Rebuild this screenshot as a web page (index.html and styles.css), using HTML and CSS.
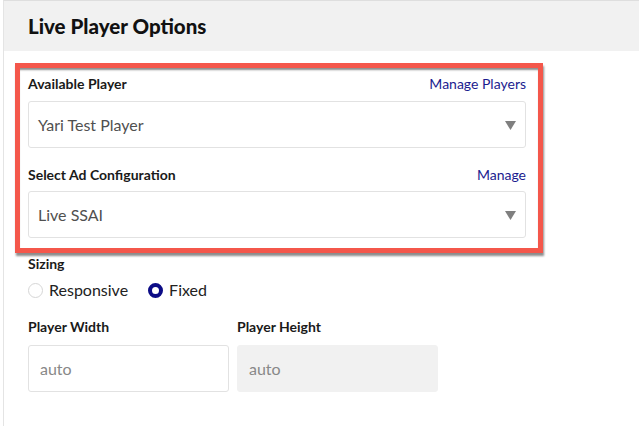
FILE: index.html
```html
<!DOCTYPE html>
<html>
<head>
<meta charset="utf-8">
<link rel="stylesheet" href="styles.css">
</head>
<body>
<div class="panel">
  <div class="header"><h1 class="title">Live Player Options</h1></div>
  <div class="content">
    <div class="highlight">
      <div class="field">
        <div class="label-row"><span class="label">Available Player</span><a class="link">Manage Players</a></div>
        <div class="select"><span class="select-text">Yari Test Player</span><svg class="arrow" width="11" height="9" viewBox="0 0 11 9"><path d="M0 0H11L5.5 9Z" fill="#7f7f7f"/></svg></div>
      </div>
      <div class="field field-second">
        <div class="label-row"><span class="label">Select Ad Configuration</span><a class="link">Manage</a></div>
        <div class="select"><span class="select-text">Live SSAI</span><svg class="arrow" width="11" height="9" viewBox="0 0 11 9"><path d="M0 0H11L5.5 9Z" fill="#7f7f7f"/></svg></div>
      </div>
    </div>
    <div class="sizing">
      <div class="label">Sizing</div>
      <div class="radios">
        <label class="radio"><span class="radio-dot"></span>Responsive</label>
        <label class="radio"><span class="radio-dot checked"></span>Fixed</label>
      </div>
    </div>
    <div class="dims">
      <div class="dim">
        <div class="label">Player Width</div>
        <div class="input"><span class="placeholder">auto</span></div>
      </div>
      <div class="dim">
        <div class="label">Player Height</div>
        <div class="input disabled"><span class="placeholder">auto</span></div>
      </div>
    </div>
  </div>
</div>
</body>
</html>
```
FILE: styles.css
```css
* { box-sizing: border-box; }
html, body { margin: 0; padding: 0; background: #fff; }
body {
  font-family: Lato, "Noto Sans", "Liberation Sans", sans-serif;
  color: #1a1a1a;
  width: 639px;
  height: 426px;
  overflow: hidden;
}
.panel {
  margin-left: 3px;
  border-left: 1px solid #e4e4e4;
  border-top: 1px solid #dedede;
  height: 426px;
}
.header {
  background: #f1f1f1;
  height: 50px;
  display: flex;
  align-items: center;
  padding-left: 24px;
}
.title {
  margin: 0;
  font-size: 20.5px;
  font-weight: 900;
  color: #111;
  padding-top: 0;
}
.content { padding-top: 12px; }
.highlight {
  margin-left: 11px;
  width: 528px;
  border: 5px solid #f4574b;
  padding: 6px 12px 10px 8px;
  box-shadow: 1px 3px 2px rgba(0,0,0,0.45), inset 0 3px 2px -1px rgba(0,0,0,0.45);
}
.label-row {
  display: flex;
  justify-content: space-between;
  align-items: center;
  height: 20px;
}
.label {
  font-size: 14px;
  font-weight: 700;
  line-height: 20px;
  color: #1a1a1a;
}
.link {
  font-size: 14px;
  line-height: 20px;
  color: #1b1b8f;
  text-decoration: none;
}
.select {
  margin-top: 7px;
  height: 47px;
  border: 1px solid #e2e2e2;
  border-radius: 3px;
  display: flex;
  align-items: center;
  justify-content: space-between;
  padding: 0 9px 0 9px;
}
.select-text { font-size: 16px; color: #505050; }
.arrow { display: block; margin-top: 1px; }
.field-second { margin-top: 17px; }
.field-second .select { margin-top: 6px; }
.sizing { padding-left: 24px; margin-top: 1px; }
.radios {
  display: flex;
  gap: 20px;
  margin-top: 6px;
}
.radio {
  display: flex;
  align-items: center;
  gap: 6px;
  font-size: 16px;
  line-height: 20px;
  color: #222;
}
.radio-dot {
  width: 15px;
  height: 15px;
  border-radius: 50%;
  border: 1px solid #d6d6d6;
  background: #fff;
  margin-top: 1px;
}
.radio-dot.checked {
  border: 4px solid #0c0c86;
  background: #fff;
}
.dims {
  display: flex;
  gap: 8px;
  padding-left: 24px;
  margin-top: 17px;
}
.dim { width: 201px; }
.input {
  margin-top: 8px;
  height: 47px;
  border: 1px solid #e2e2e2;
  border-radius: 3px;
  display: flex;
  align-items: center;
  padding-left: 11px;
}
.input.disabled { background: #f1f1f1; border-color: #f1f1f1; }
.placeholder { font-size: 16px; color: #888; }
```
